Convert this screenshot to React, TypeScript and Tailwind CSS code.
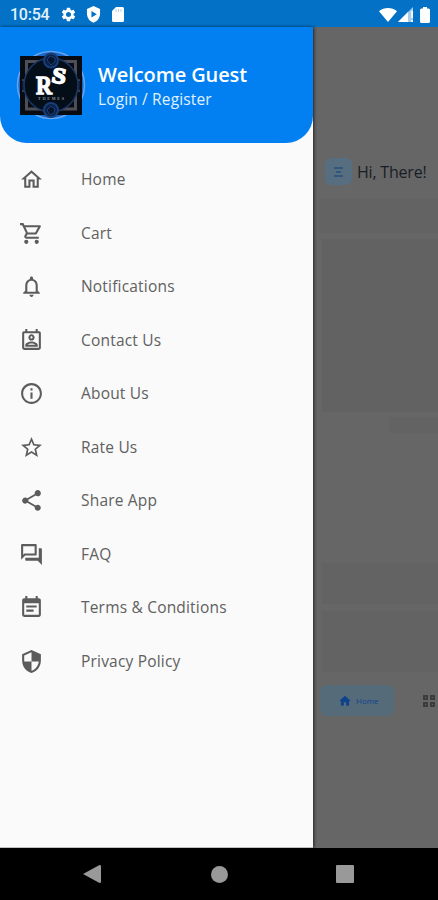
import type { IconType } from "react-icons";
import {
  MdEventNote,
  MdHome,
  MdInfoOutline,
  MdNotificationsNone,
  MdOutlineForum,
  MdOutlineHome,
  MdOutlinePermContactCalendar,
  MdOutlineShoppingCart,
  MdSecurity,
  MdSettings,
  MdShare,
  MdStarBorder,
} from "react-icons/md";

const menu: { label: string; icon: IconType }[] = [
  { label: "Home", icon: MdOutlineHome },
  { label: "Cart", icon: MdOutlineShoppingCart },
  { label: "Notifications", icon: MdNotificationsNone },
  { label: "Contact Us", icon: MdOutlinePermContactCalendar },
  { label: "About Us", icon: MdInfoOutline },
  { label: "Rate Us", icon: MdStarBorder },
  { label: "Share App", icon: MdShare },
  { label: "FAQ", icon: MdOutlineForum },
  { label: "Terms & Conditions", icon: MdEventNote },
  { label: "Privacy Policy", icon: MdSecurity },
];

function StatusBar() {
  return (
    <div className="flex h-[27px] shrink-0 items-center bg-[#0271c6] pl-[10px] pr-[8px] pt-[2px] text-white">
      <span className="w-[50px] font-[Roboto,sans-serif] text-[16px] font-medium leading-none tracking-[-0.25px] text-[#e3f1fd]">10:54</span>
      <MdSettings className="size-[17px]" />
      <svg viewBox="0 0 16 18" className="ml-[9px] h-[17px] w-[15px]" fill="currentColor">
        <path fillRule="evenodd" d="M8 0 1 3v5c0 4.600 3 8.500 7 9.800 4-1.300 7-5.200 7-9.800V3L8 0Zm-2.200 5.200v7l5.700-3.500-5.700-3.500Z" />
      </svg>
      <svg viewBox="0 0 12 15" className="ml-[11px] h-[15px] w-[12px]">
        <path fill="currentColor" d="M4 0h6.500A1.500 1.500 0 0 1 12 1.500v12a1.500 1.500 0 0 1-1.500 1.500h-9A1.500 1.500 0 0 1 0 13.500V4l4-4Z" />
        <path d="M4 2v3M6.500 2v3M9 2v3" stroke="#9cc8ec" strokeWidth=".8" />
      </svg>
      <svg viewBox="0 0 18 14" className="ml-auto h-[14px] w-[18px]" fill="currentColor">
        <path d="M0 3.300C5 -1 13 -1 18 3.300L9 14 0 3.300Z" />
      </svg>
      <svg viewBox="0 0 15 15" className="ml-px h-[15px] w-[15px]" fill="currentColor">
        <path d="M15 0v15H0L15 0Z" opacity=".65" />
        <path d="M10 5v10H0L10 5ZM13.300 4H15v7h-1.700zM13.300 13H15v2h-1.700z" />
      </svg>
      <svg viewBox="0 0 10 16" className="ml-[7px] h-[16px] w-[10px]" fill="currentColor">
        <path d="M3 0h4v1.500h1.500A1.500 1.500 0 0 1 10 3v11.500A1.500 1.500 0 0 1 8.500 16h-7A1.500 1.500 0 0 1 0 14.500V3a1.500 1.500 0 0 1 1.500-1.500H3V0Z" />
      </svg>
    </div>
  );
}

function Logo() {
  return (
    <svg viewBox="0 0 70 70" className="size-[70px] shrink-0">
      <circle cx="35" cy="35" r="33.500" fill="#1769c9" stroke="#6ba5ed" strokeWidth="1.500" />
      <rect x="4" y="6" width="62" height="59" fill="#080b12" />
      <path d="M10.500 11.500h49v47.500h-49z" fill="none" stroke="#4d4e58" strokeWidth="3" />
      <path d="M6 30h5v11H6M64 30h-5v11h5" fill="#111c30" stroke="#626875" />
      <circle cx="35" cy="35" r="27" fill="#030e18" stroke="#1c3766" strokeWidth="1.500" />
      <circle cx="35" cy="10.500" r="7" fill="#0a2148" stroke="#193d77" strokeWidth="2" />
      <circle cx="35" cy="60" r="7" fill="#0a2148" stroke="#193d77" strokeWidth="2" />
      <path d="m31 10 3-4 5 2v4l-4 3zM31 60l4-4 4 3-1 4-4 2z" fill="#06142f" stroke="#244b85" strokeWidth=".8" />
      <text x="20" y="44" fill="#fff" stroke="#fff" strokeWidth="1.300" fontSize="26" fontWeight="700" fontFamily="Liberation Serif, serif" textLength="16" lengthAdjust="spacingAndGlyphs">R</text>
      <text x="36" y="33" fill="#fff" stroke="#fff" strokeWidth="1.600" fontSize="22" fontWeight="700" fontFamily="Liberation Serif, serif" textLength="14" lengthAdjust="spacingAndGlyphs" transform="rotate(10 43 26)">S</text>
      <text x="22" y="49.500" fill="#8f949c" fontSize="4" fontWeight="700" fontFamily="Liberation Serif, serif" textLength="26">THEMES</text>
    </svg>
  );
}

function Drawer() {
  return (
    <aside className="z-10 w-[313px] shrink-0 border-b border-[#c0c0c0] bg-[#fafafa] shadow-[1px_0_3px_rgba(0,0,0,0.65)]">
      <header className="flex h-[116px] items-center rounded-b-[27px] bg-[#0280f2] pl-[16px] pb-px">
        <Logo />
        <div className="ml-[12px] pt-[3px] text-white">
          <div className="text-[20px] font-semibold leading-[26px] tracking-[-0.1px]">Welcome Guest</div>
          <div className="text-[15.5px] font-medium leading-[22px] tracking-[0.14px] text-[#e1f0ff]">Login / Register</div>
        </div>
      </header>
      <nav className="pt-[10px]">
        {menu.map(({ label, icon: Icon }) => (
          <a key={label} className="flex h-[53.5px] items-center pl-[19px] text-[#5c5c5c]">
            <Icon className="size-[25px]" />
            <span className="ml-[37px] text-[15.5px] leading-none tracking-[0.19px] text-[#606060]">{label}</span>
          </a>
        ))}
      </nav>
    </aside>
  );
}

function DimmedPage() {
  return (
    <main className="flex min-w-0 flex-1 flex-col overflow-hidden bg-[#666]">
      <div className="mt-[131px] flex h-[27px] items-center pl-[12px]">
        <div className="flex size-[27px] shrink-0 items-center justify-center rounded-[6px] bg-[#566e7f]">
          <svg viewBox="0 0 9 10" className="h-[10px] w-[9px]" stroke="#24517d" strokeWidth="1.300">
            <path d="M0 1h9M2 5h5M0 9h9" />
          </svg>
        </div>
        <span className="ml-[5px] whitespace-nowrap text-[16px] font-medium leading-none tracking-[-0.2px] text-[#191d26]">Hi, There!</span>
      </div>
      <div className="ml-[6px] mt-[14px] h-[34px] bg-[#636363]" />
      <div className="ml-[9px] mt-[6px] h-[173px] bg-[#626262]" />
      <div className="ml-[76px] mt-[5px] h-[16px] bg-[#636363]" />
      <div className="ml-[9px] mt-[130px] h-[41px] bg-[#636363]" />
      <div className="ml-[9px] mt-[7px] h-[61px] bg-[#636363]" />
      <div className="ml-[7px] mt-[13px] flex h-[31px] w-[150px] shrink-0 items-center">
        <div className="flex h-full w-[74px] items-center rounded-[7px] bg-[#566b79] pl-[18px] text-[#0e438c]">
          <MdHome className="size-[14px]" />
          <span className="ml-[4px] text-[8px] font-medium leading-none">Home</span>
        </div>
        <div className="ml-[29px] grid grid-cols-2 gap-[2px]">
          <span className="size-[5px] border-2 border-[#3c3c3c]" />
          <span className="size-[5px] border-2 border-[#3c3c3c]" />
          <span className="size-[5px] border-2 border-[#3c3c3c]" />
          <span className="size-[5px] border-2 border-[#3c3c3c]" />
        </div>
      </div>
    </main>
  );
}

function NavigationBar() {
  return (
    <div className="flex h-[52px] shrink-0 items-center bg-black pl-[83px]">
      <svg viewBox="0 0 18 18" className="size-[18px]" fill="#999"><path d="M0 9 16.500 0Q18 0 18 1v16q0 1-1.500 1Z" /></svg>
      <div className="ml-[110px] size-[17px] rounded-full bg-[#999]" />
      <div className="ml-[108px] size-[18px] rounded-[1px] bg-[#999]" />
    </div>
  );
}

export default function App() {
  return (
    <div className="flex h-[900px] w-[438px] flex-col overflow-hidden font-['Open_Sans',sans-serif]">
      <StatusBar />
      <div className="flex min-h-0 flex-1">
        <Drawer />
        <DimmedPage />
      </div>
      <NavigationBar />
    </div>
  );
}
